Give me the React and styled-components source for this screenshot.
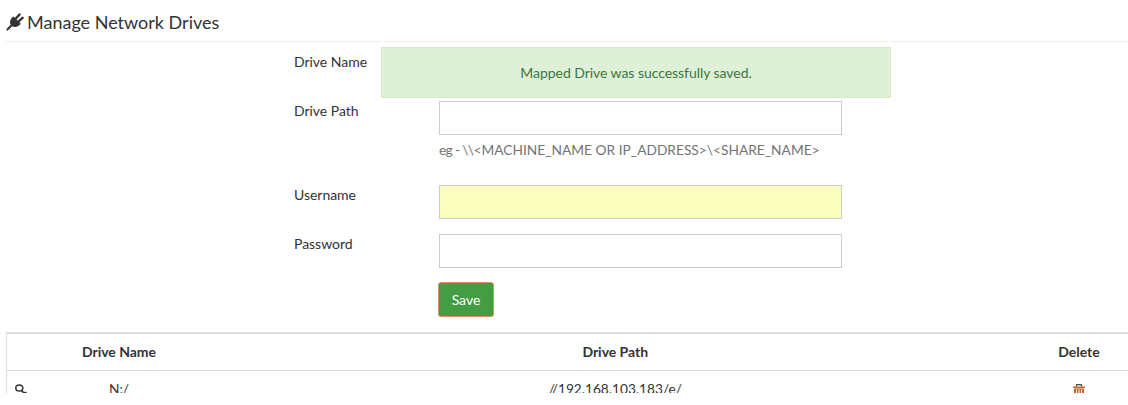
import React from 'react';
import styled, { createGlobalStyle } from 'styled-components';

const GlobalStyle = createGlobalStyle`
  html, body {
    margin: 0;
    padding: 0;
    background: #fff;
  }
  body {
    font-family: Lato, "Liberation Sans", sans-serif;
    font-size: 14px;
    line-height: 20px;
    color: #333;
  }
`;

const Page = styled.div`
  width: 1128px;
  height: 393px;
  overflow: hidden;
  padding-left: 6px;
  box-sizing: border-box;
`;

const Header = styled.h1`
  display: flex;
  align-items: center;
  gap: 3px;
  height: 42px;
  margin: 0;
  padding-top: 3px;
  box-sizing: border-box;
  font-size: 18px;
  font-weight: 400;
  border-bottom: 1px solid #eee;
`;

const Form = styled.form`
  position: relative;
  padding: 10px 0 0 288px;
`;

const Row = styled.div`
  display: flex;
  margin-bottom: ${(p) => (p.$tight ? '5px' : '15px')};
`;

const Label = styled.label`
  width: 145px;
  flex: none;
  letter-spacing: -0.03px;
`;

const Field = styled.input`
  width: 403px;
  height: 34px;
  box-sizing: border-box;
  border: 1px solid #ccc;
  background: ${(p) => (p.$filled ? '#faffbd' : '#fff')};
`;

const Hint = styled.div`
  margin: 0 0 25px 145px;
  font-size: 13.75px;
  color: #737373;
`;

const HintPrefix = styled.span`
  letter-spacing: -0.65px;
`;

const Alert = styled.div`
  position: absolute;
  left: 375px;
  top: 5px;
  width: 510px;
  height: 51px;
  box-sizing: border-box;
  padding-top: 15px;
  text-align: center;
  letter-spacing: -0.05px;
  color: #3c763d;
  background: #dff0d8;
  border: 1px solid #d6e9c6;
`;

const SaveButton = styled.button`
  display: block;
  width: 56px;
  height: 35px;
  margin: -1px 0 15px 144px;
  padding: 0;
  font: inherit;
  color: #fff;
  background: #449d44;
  border: 1px solid #e08e5b;
  border-radius: 3px;
`;

const Table = styled.table`
  width: 100%;
  border-collapse: collapse;
  table-layout: fixed;
  border-top: 2px solid #ddd;
  border-left: 1px solid #ddd;
`;

const HeadCell = styled.th`
  height: 36px;
  padding: 0;
  font-weight: 700;
  text-align: center;
  letter-spacing: -0.03px;
  border-bottom: 1px solid #ddd;
`;

const Cell = styled.td`
  padding: 8px 0;
  font-size: 13.7px;
  text-align: center;
  color: #333;
`;

const IconCell = styled(Cell)`
  text-align: left;
  padding-left: 8px;
`;

const RowIcon = styled.svg`
  display: block;
  flex: none;
`;

const PlugIcon = () => (
  <RowIcon width="18" height="18" viewBox="0 0 18 18" fill="#333">
    <path d="M7.500 3.500L14.800 10.800C12.800 13.800 9.200 14.800 6.200 13.300L3 16.600L1.200 17.800L.2 16.800L1.400 15L4.700 11.800C3.200 8.800 4.500 5.500 7.500 3.500Z" />
    <path d="M9.500 6L13.500 1.500M12.300 8.600L16.600 4.800" fill="none" stroke="#333" strokeWidth="2.400" strokeLinecap="round" />
  </RowIcon>
);

const KeyIcon = () => (
  <RowIcon width="13" height="11" viewBox="0 0 13 11" fill="none" stroke="#333" strokeWidth="1.500">
    <ellipse cx="4.300" cy="4" rx="3.500" ry="3.100" />
    <path d="M6.500 6.500c1.500 2 3 3 5.500 2.500M10 9.500l.8-1.800" />
  </RowIcon>
);

const TrashIcon = styled(RowIcon)`
  margin: 0 auto;
`;

const Trash = () => (
  <TrashIcon width="12" height="11" viewBox="0 0 12 11">
    <path d="M3.500 2.500V.7h5v1.800" fill="none" stroke="#5a4a3a" strokeWidth="1.200" />
    <path d="M0 2.500h12v1.500H0z" fill="#c1652a" />
    <path d="M1 4.500h10V11H1zM3 5.500v4.500h1V5.500zm2.500 0v4.500h1V5.500zM8 5.500v4.500h1V5.500z" fill="#c1652a" fillRule="evenodd" />
  </TrashIcon>
);

export default function App() {
  return (
    <>
      <GlobalStyle />
      <Page>
        <Header>
          <PlugIcon />
          Manage Network Drives
        </Header>
        <Form>
          <Alert>Mapped Drive was successfully saved.</Alert>
          <Row>
            <Label>Drive Name</Label>
            <Field />
          </Row>
          <Row $tight>
            <Label>Drive Path</Label>
            <Field />
          </Row>
          <Hint>
            <HintPrefix>{'eg - \\\\'}</HintPrefix>
            {'<MACHINE_NAME OR IP_ADDRESS>\\<SHARE_NAME>'}
          </Hint>
          <Row>
            <Label>Username</Label>
            <Field $filled />
          </Row>
          <Row>
            <Label>Password</Label>
            <Field />
          </Row>
          <SaveButton type="button">Save</SaveButton>
        </Form>
        <Table>
          <colgroup>
            <col style={{ width: '31px' }} />
            <col style={{ width: '163px' }} />
            <col />
            <col style={{ width: '98px' }} />
          </colgroup>
          <thead>
            <tr>
              <HeadCell />
              <HeadCell>Drive Name</HeadCell>
              <HeadCell>Drive Path</HeadCell>
              <HeadCell>Delete</HeadCell>
            </tr>
          </thead>
          <tbody>
            <tr>
              <IconCell><KeyIcon /></IconCell>
              <Cell>N:/</Cell>
              <Cell>//192.168.103.183/e/</Cell>
              <Cell><Trash /></Cell>
            </tr>
          </tbody>
        </Table>
      </Page>
    </>
  );
}
